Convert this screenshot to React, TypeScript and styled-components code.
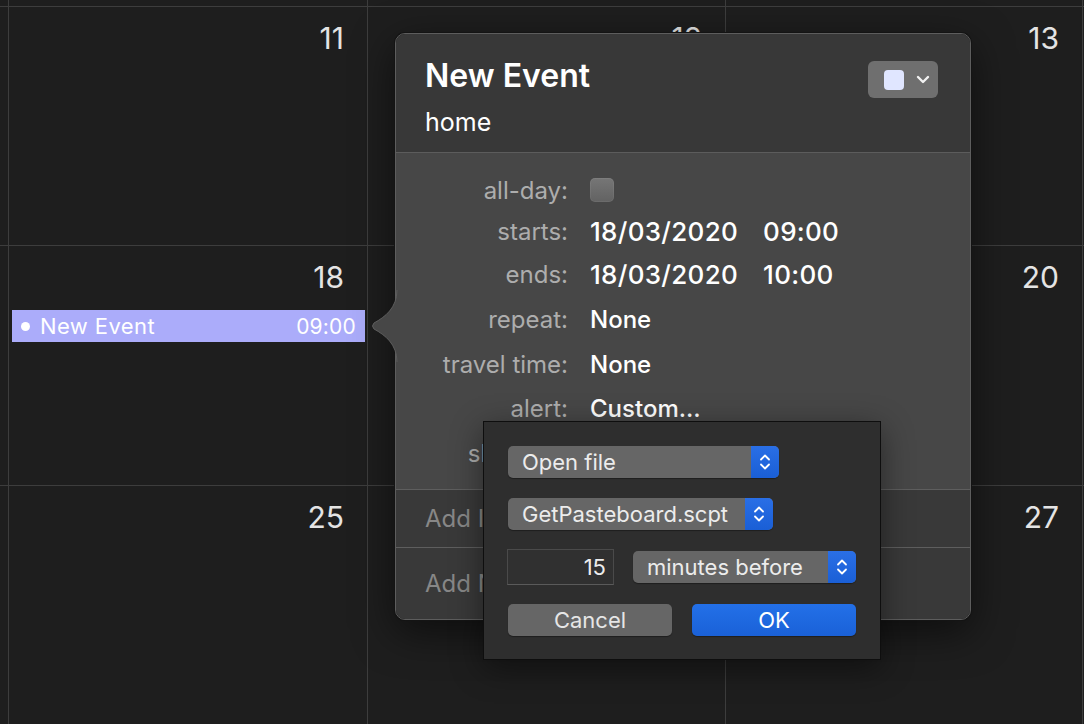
import React from "react";
import styled, { createGlobalStyle } from "styled-components";

const GlobalStyle = createGlobalStyle`
  html, body { margin: 0; padding: 0; background: #1e1e1e; }
  body {
    font-family: Inter, "Noto Sans", "Liberation Sans", sans-serif;
    -webkit-font-smoothing: antialiased;
  }
  * { box-sizing: border-box; }
`;

const Screen = styled.div`
  position: relative;
  width: 1084px;
  height: 724px;
  overflow: hidden;
  background: #1e1e1e;
`;

const Grid = styled.div`
  display: grid;
  grid-template-columns: 8px 358px 357px 356px 1fr;
  grid-template-rows: 6px 238px 239px 1fr;
  gap: 1px;
  background: #3d3d3d;
  width: 100%;
  height: 100%;
`;

const Cell = styled.div`
  background: #1e1e1e;
  display: flex;
  flex-direction: column;
  min-width: 0;
  overflow: hidden;
`;

const DayNumber = styled.div`
  align-self: flex-end;
  padding: 13px 23px 0 0;
  font-size: 30px;
  line-height: 36px;
  color: #e4e4e4;
`;

const EventBar = styled.div`
  margin: 15px 2px 0 3px;
  height: 32px;
  background: #abacfa;
  display: flex;
  align-items: center;
  padding: 0 9px;
  color: #ffffff;
  font-size: 22px;
  letter-spacing: 0.4px;
`;

const Dot = styled.span`
  width: 9px;
  height: 9px;
  border-radius: 50%;
  background: #ffffff;
  margin-right: 10px;
`;

const EventTitle = styled.span`
  flex: 1;
`;

const EventTime = styled.span`
  font-size: 21px;
  letter-spacing: 0.2px;
`;

/* ---------- Popover ---------- */

const Popover = styled.div`
  position: absolute;
  left: 395px;
  top: 33px;
  width: 576px;
  height: 587px;
  border-radius: 10px;
  border: 1px solid #5d5d5d;
  box-shadow: 0 0 0 1px #141414, 0 12px 40px rgba(0, 0, 0, 0.55);
  display: flex;
  flex-direction: column;
`;

const Arrow = styled.svg`
  position: absolute;
  left: -26px;
  top: 256px;
`;

const Header = styled.div`
  height: 119px;
  display: flex;
  align-items: flex-start;
  padding: 23px 32px 0 29px;
  background: #383838;
  border-radius: 9px 9px 0 0;
  border-bottom: 1px solid #5c5c5c;
`;

const HeaderText = styled.div`
  flex: 1;
  display: flex;
  flex-direction: column;
  gap: 12px;
`;

const Title = styled.div`
  font-size: 32px;
  line-height: 38px;
  font-weight: 600;
  color: #ffffff;
`;

const Subtitle = styled.div`
  font-size: 25px;
  line-height: 30px;
  color: #ffffff;
`;

const ColorButton = styled.div`
  margin-top: 4px;
  width: 70px;
  height: 37px;
  border-radius: 6px;
  background: #6f6f6f;
  display: flex;
  align-items: center;
  padding-left: 16px;
  gap: 12px;
`;

const Swatch = styled.div`
  width: 20px;
  height: 20px;
  border-radius: 4px;
  background: #e0e6ff;
`;

const Body = styled.div`
  height: 336px;
  background: #474747;
  padding-top: 17px;
  display: flex;
  flex-direction: column;
`;

const Row = styled.div<{ $h: number }>`
  height: ${(p) => p.$h}px;
  display: grid;
  grid-template-columns: 172px 1fr;
  column-gap: 22px;
  align-items: center;
`;

const Label = styled.div`
  text-align: right;
  font-size: 24px;
  color: #adadad;
  white-space: nowrap;
`;

const Value = styled.div<{ $big?: boolean }>`
  font-size: ${(p) => (p.$big ? 26 : 24)}px;
  font-weight: 500;
  color: #ffffff;
  display: flex;
  gap: 25px;
  white-space: nowrap;
  letter-spacing: ${(p) => (p.$big ? "0.3px" : "0")};
`;

const Checkbox = styled.div`
  width: 24px;
  height: 24px;
  border-radius: 5px;
  background: linear-gradient(#767676, #626262);
  box-shadow: inset 0 0 0 1px rgba(255, 255, 255, 0.06);
`;

const Section = styled.div<{ $h: number; $last?: boolean }>`
  height: ${(p) => p.$h}px;
  background: #393939;
  border-top: 1px solid #5e5e5e;
  display: flex;
  align-items: center;
  padding-left: 29px;
  font-size: 24px;
  color: #878787;
  border-radius: ${(p) => (p.$last ? "0 0 9px 9px" : "0")};
`;

/* ---------- Custom alert sheet ---------- */

const Sheet = styled.div`
  position: absolute;
  left: 483px;
  top: 421px;
  width: 398px;
  height: 239px;
  background: #2e2e2e;
  border: 1px solid #0e0e0e;
  box-shadow: 0 8px 30px rgba(0, 0, 0, 0.45);
  padding: 24px 0 0 24px;
  display: flex;
  flex-direction: column;
`;

const SheetRow = styled.div<{ $gap: number; $mt: number }>`
  display: flex;
  align-items: center;
  gap: ${(p) => p.$gap}px;
  margin-top: ${(p) => p.$mt}px;
`;

const Popup = styled.div<{ $w: number }>`
  width: ${(p) => p.$w}px;
  height: 32px;
  border-radius: 5px;
  background: #666666;
  display: flex;
  align-items: center;
  overflow: hidden;
  box-shadow: 0 1px 1px rgba(0, 0, 0, 0.35);
`;

const PopupText = styled.span`
  flex: 1;
  padding-left: 14px;
  font-size: 22px;
  color: #ececec;
  white-space: nowrap;
`;

const Stepper = styled.span`
  width: 28px;
  height: 100%;
  background: linear-gradient(#2a6fe6, #1a5fd6);
  display: flex;
  align-items: center;
  justify-content: center;
`;

const NumberField = styled.div`
  width: 107px;
  height: 36px;
  margin-left: -1px;
  background: #303030;
  border: 1px solid #4a4a4a;
  border-bottom-color: #5a5a5a;
  display: flex;
  align-items: center;
  justify-content: flex-end;
  padding-right: 7px;
  font-size: 22px;
  color: #ececec;
`;

const PushButton = styled.div<{ $primary?: boolean }>`
  width: 164px;
  height: 32px;
  border-radius: 5px;
  background: ${(p) => (p.$primary ? "linear-gradient(#2370e8, #1a61d8)" : "#666666")};
  color: ${(p) => (p.$primary ? "#ffffff" : "#e6e6e6")};
  font-size: 22px;
  display: flex;
  align-items: center;
  justify-content: center;
  box-shadow: 0 1px 1px rgba(0, 0, 0, 0.35);
`;

const Chevron = () => (
  <svg width="14" height="9" viewBox="0 0 14 9">
    <path d="M2 2 L7 7 L12 2" fill="none" stroke="#f2f2f2" strokeWidth="2.4" strokeLinecap="round" strokeLinejoin="round" />
  </svg>
);

const UpDown = () => (
  <svg width="12" height="20" viewBox="0 0 12 20">
    <path d="M2 7.5 L6 3.5 L10 7.5" fill="none" stroke="#ffffff" strokeWidth="1.8" strokeLinecap="round" strokeLinejoin="round" />
    <path d="M2 12.5 L6 16.5 L10 12.5" fill="none" stroke="#ffffff" strokeWidth="1.8" strokeLinecap="round" strokeLinejoin="round" />
  </svg>
);

const PopupButton = ({ w, text }: { w: number; text: string }) => (
  <Popup $w={w}>
    <PopupText>{text}</PopupText>
    <Stepper>
      <UpDown />
    </Stepper>
  </Popup>
);

/* Days hidden entirely behind the popover/sheet are left blank. */
const rows: (number | null)[][] = [
  [null, null, null, null, null],
  [null, 11, 12, 13, null],
  [null, 18, null, 20, null],
  [null, 25, null, 27, null],
];

export default function App() {
  return (
    <>
      <GlobalStyle />
      <Screen>
        <Grid>
          {rows.map((r, ri) =>
            r.map((d, ci) => (
              <Cell key={`${ri}-${ci}`}>
                {d !== null && <DayNumber>{d}</DayNumber>}
                {d === 18 && (
                  <EventBar>
                    <Dot />
                    <EventTitle>New Event</EventTitle>
                    <EventTime>09:00</EventTime>
                  </EventBar>
                )}
              </Cell>
            ))
          )}
        </Grid>

        <Popover>
          <Arrow width="28" height="72" viewBox="0 0 28 72">
            <path d="M28 0 L27 0 C27 18 15 27 4 33 Q1 36 4 39 C15 45 27 54 27 72 L28 72 Z" fill="#474747" />
            <path d="M27 0 C27 18 15 27 4 33 Q1 36 4 39 C15 45 27 54 27 72" fill="none" stroke="#5d5d5d" strokeWidth="1" />
          </Arrow>
          <Header>
            <HeaderText>
              <Title>New Event</Title>
              <Subtitle>home</Subtitle>
            </HeaderText>
            <ColorButton>
              <Swatch />
              <Chevron />
            </ColorButton>
          </Header>
          <Body>
            <Row $h={40}>
              <Label>all-day:</Label>
              <Checkbox />
            </Row>
            <Row $h={42}>
              <Label>starts:</Label>
              <Value $big>
                <span>18/03/2020</span>
                <span>09:00</span>
              </Value>
            </Row>
            <Row $h={44}>
              <Label>ends:</Label>
              <Value $big>
                <span>18/03/2020</span>
                <span>10:00</span>
              </Value>
            </Row>
            <Row $h={46}>
              <Label>repeat:</Label>
              <Value>None</Value>
            </Row>
            <Row $h={44}>
              <Label>travel time:</Label>
              <Value>None</Value>
            </Row>
            <Row $h={44}>
              <Label>alert:</Label>
              <Value>Custom…</Value>
            </Row>
            <Row $h={46}>
              <Label>show as:</Label>
              <Value>Busy</Value>
            </Row>
          </Body>
          <Section $h={58}>Add Invitees</Section>
          <Section $h={72} $last>
            Add Notes, URL, or Attachments
          </Section>
        </Popover>

        <Sheet>
          <PopupButton w={271} text="Open file" />
          <SheetRow $gap={0} $mt={20}>
            <PopupButton w={265} text="GetPasteboard.scpt" />
          </SheetRow>
          <SheetRow $gap={19} $mt={19}>
            <NumberField>15</NumberField>
            <PopupButton w={223} text="minutes before" />
          </SheetRow>
          <SheetRow $gap={20} $mt={19}>
            <PushButton>Cancel</PushButton>
            <PushButton $primary>OK</PushButton>
          </SheetRow>
        </Sheet>
      </Screen>
    </>
  );
}
